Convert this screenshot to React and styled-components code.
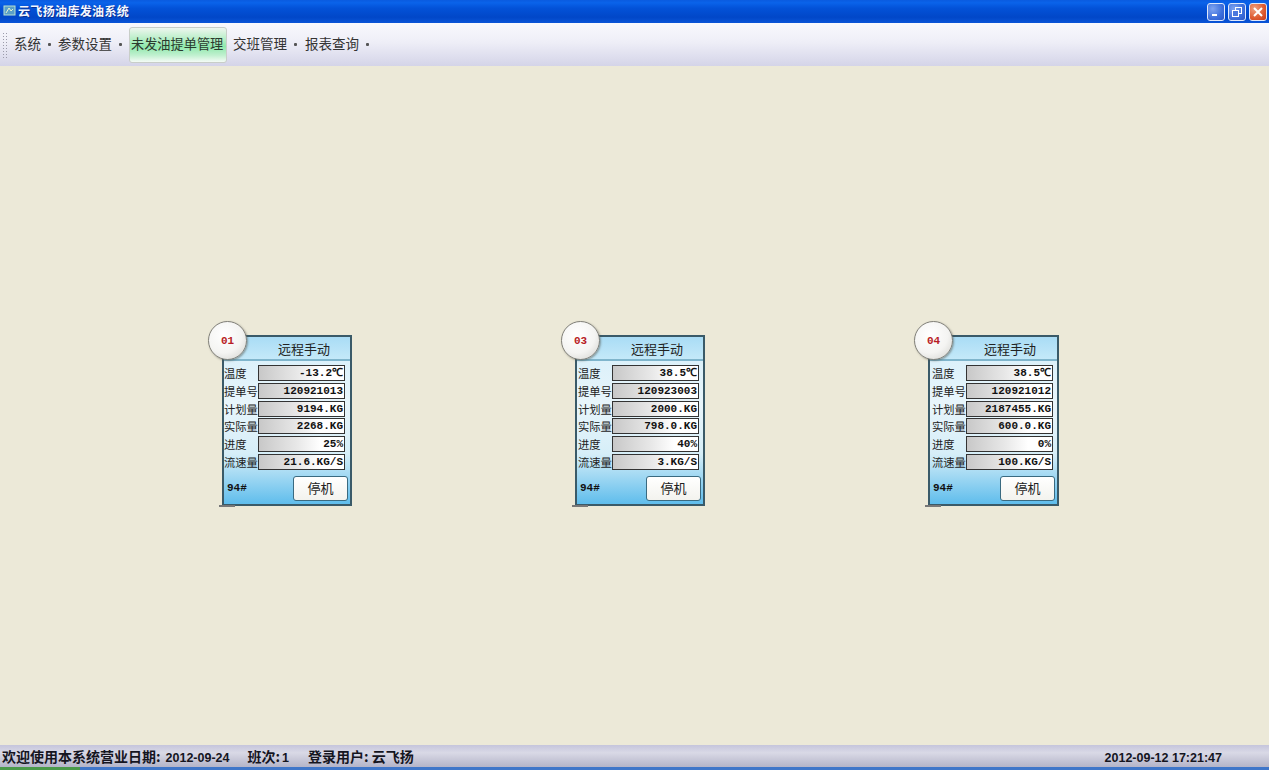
import React from "react";
import styled, { createGlobalStyle } from "styled-components";

const Global = createGlobalStyle`
  html, body { margin: 0; padding: 0; height: 100%; overflow: hidden; }
  #root { height: 100%; }
  * { box-sizing: border-box; }
`;
const CJK = `"Noto Sans CJK SC", "Noto Sans", sans-serif`;
const Desktop = styled.div`
  width: 1269px; height: 770px; display: flex; flex-direction: column;
  background: #ece9d8; font-family: ${CJK}; color: #222; overflow: hidden;
`;
const TitleBar = styled.header`
  height: 23px; flex: none; display: flex; align-items: center; padding: 0 2px 2px 3px;
  background: linear-gradient(180deg, #0a5be0 0%, #0a63ea 12%, #0352d8 35%, #0147c8 75%, #0a55d8 100%);
`;
const AppIcon = styled.svg`width: 13px; height: 13px; flex: none; margin-right: 2px;`;
const Title = styled.span`
  color: #f4f8ff; font-size: 12px; font-weight: 700; letter-spacing: .35px; line-height: 16px; white-space: nowrap;
  text-shadow: 1px 1px 0 #0a2f90;
`;
const WindowButtons = styled.div`margin-left: auto; display: flex; gap: 3px; padding-top: 2px;`;
const WinBtn = styled.div`
  width: 18px; height: 18px; border: 1px solid #dfe8fb; border-radius: 3px; display: flex; align-items: center; justify-content: center;
  background: ${p => p.$close
    ? "radial-gradient(circle at 30% 30%, #f0a080, #dd5a30 60%, #c83a1c)"
    : "radial-gradient(circle at 30% 30%, #7fa4f0, #3d6fdc 60%, #2d58c8)"};
`;
const MenuBar = styled.nav`
  height: 43px; flex: none; display: flex; align-items: center; padding: 0 0 0 2px;
  background: linear-gradient(180deg, #f9f9fd 0%, #eeeef7 45%, #d4d4e8 100%);
`;
const Grip = styled.div`
  width: 7px; height: 26px; margin-right: 5px; flex: none;
  background-image: radial-gradient(circle, #9b9baa 0.8px, transparent 1px);
  background-size: 3px 3px;
`;
const MenuItem = styled.div`
  display: flex; align-items: center; height: 36px; padding-bottom: 3px; font-size: 13.5px; color: #333; white-space: nowrap;
  padding-right: ${p => p.$pad}px;
`;
const Caret = styled.span`
  width: 3px; height: 3px; background: #555; margin-left: 7px; border-radius: 1px; flex: none; margin-top: 3px;
`;
const ActiveItem = styled.div`
  display: flex; align-items: center; height: 36px; width: 98px; margin-right: 6px; flex: none; padding: 0 0 3px 1px;
  font-size: 13.2px; color: #2a3a2e; white-space: nowrap; border-radius: 3px; border: 1px solid #c8cec8;
  background: linear-gradient(180deg, #eef6ef 0%, #c4f0d0 25%, #8fe8ac 55%, #c0f0cf 80%, #f4fbf6 100%);
`;
const Canvas = styled.main`
  flex: 1; display: flex; gap: 223px; padding: 269px 0 0 222px; background: #ece9d8;
`;
const Card = styled.section`
  position: relative; width: ${p => (p.$wide ? 131 : 130)}px; height: 171px; flex: none; display: flex; flex-direction: column;
  border: 2px solid #3a5a68;
  background: linear-gradient(180deg, #bfe6f8 0%, #d9f0fa 8%, #e8f5fb 40%, #d6eef8 70%, #5fbdec 100%);
`;
const Badge = styled.div`
  position: absolute; left: -16px; top: -16px; width: 39px; height: 39px; border-radius: 50%;
  display: flex; align-items: center; justify-content: center;
  background: radial-gradient(circle at 40% 35%, #ffffff 0%, #f4f4f2 55%, #d0d0cc 100%);
  border: 1.5px solid #807f78; box-shadow: 1px 1px 2px rgba(80,80,70,.5);
  color: #b81c24; font: 700 11px "Liberation Mono", monospace;
`;
const Mode = styled.div`
  height: 24px; flex: none; padding: 3px 0 0 54px; font-size: 13px; line-height: 18px; color: #222; white-space: nowrap;
  border-bottom: 2px solid #7fb5cc;
  background: linear-gradient(180deg, #a9dcf5, #c4e9f9);
`;
const Rows = styled.div`
  display: flex; flex-direction: column; gap: 1.8px; padding: 4px 5px 0 ${p => p.$inset}px;
`;
const Row = styled.div`display: flex; align-items: center; justify-content: space-between; height: 16px;`;
const Label = styled.span`font-size: 11.3px; line-height: 16px; color: #222; white-space: nowrap; width: 34px; flex: none;`;
const Value = styled.div`
  width: 87px; height: 16px; flex: none; border: 1px solid #333; text-align: right; padding-right: 1px;
  background: linear-gradient(90deg, #c8c8c8 0%, #e8e8e8 45%, #ffffff 72%);
  font: 700 11px/14px "Liberation Mono", monospace; color: #111; white-space: nowrap; overflow: hidden;
`;
const Foot = styled.div`display: flex; align-items: center; justify-content: space-between; padding: 6px 2px 0 3px;`;
const Oil = styled.span`font: 700 11px "Liberation Mono", monospace; color: #111;`;
const Stop = styled.button`
  width: 55px; height: 25px; padding: 0 0 2px; border: 1px solid #3a6a80; border-radius: 3px; background: linear-gradient(180deg,#fff,#f3f3ee);
  font: 400 13px ${CJK}; color: #222;
`;
const Tick = styled.i`
  position: absolute; left: -5px; bottom: -3px; width: 16px; height: 2px; background: #777;
`;
const StatusBar = styled.footer`
  height: 22px; flex: none; display: flex; align-items: baseline; padding: 1px 47px 0 2px; white-space: nowrap; line-height: 20px;
  background: linear-gradient(180deg, #c5c5dc 0%, #d9d9e6 35%, #b4b4c8 100%);
  color: #15151f; font-size: 14px; font-weight: 700;
`;
const Segment = styled.span`margin-left: ${p => p.$ml}px;`;
const Num = styled.span`font: 700 12.5px/20px "Liberation Sans", sans-serif; margin-left: ${p => p.$ml || 0}px;`;
const Clock = styled.span`margin-left: auto; font: 700 12.5px/20px "Liberation Sans", sans-serif;`;
const Taskbar = styled.div`
  height: 3px; flex: none; display: flex;
  background: #3f76c9;
`;
const Start = styled.div`width: 80px; background: #4a9a4a;`;

const cards = [
  { id: "01", inset: 0, v: ["-13.2℃", "120921013", "9194.KG", "2268.KG", "25%", "21.6.KG/S"] },
  { id: "03", inset: 1, v: ["38.5℃", "120923003", "2000.KG", "798.0.KG", "40%", "3.KG/S"] },
  { id: "04", inset: 2, v: ["38.5℃", "120921012", "2187455.KG", "600.0.KG", "0%", "100.KG/S"], wide: true },
];
const labels = ["温度", "提单号", "计划量", "实际量", "进度", "流速量"];

export default function App() {
  return (
    <Desktop>
      <Global />
      <TitleBar>
        <AppIcon viewBox="0 0 13 13">
          <rect x="1" y="2" width="11" height="9" fill="#5aa0c8" stroke="#b8e0d0" />
          <path d="M3 9 L6 4 L8 7 L10 5" stroke="#e8f4d0" fill="none" />
        </AppIcon>
        <Title>云飞扬油库发油系统</Title>
        <WindowButtons>
          <WinBtn>
            <svg width="10" height="10" viewBox="0 0 10 10"><rect x="1" y="7" width="5" height="2" fill="#fff" /></svg>
          </WinBtn>
          <WinBtn>
            <svg width="12" height="12" viewBox="0 0 12 12" fill="none" stroke="#fff">
              <rect x="4.5" y="1.5" width="6" height="6" />
              <rect x="1.5" y="4.5" width="6" height="6" fill="#4a78de" />
            </svg>
          </WinBtn>
          <WinBtn $close>
            <svg width="12" height="12" viewBox="0 0 12 12" stroke="#fff" strokeWidth="2">
              <path d="M2 2 L10 10 M10 2 L2 10" />
            </svg>
          </WinBtn>
        </WindowButtons>
      </TitleBar>
      <MenuBar>
        <Grip />
        <MenuItem $pad={7}>系统<Caret /></MenuItem>
        <MenuItem $pad={7}>参数设置<Caret /></MenuItem>
        <ActiveItem>未发油提单管理</ActiveItem>
        <MenuItem $pad={8}>交班管理<Caret /></MenuItem>
        <MenuItem $pad={0}>报表查询<Caret /></MenuItem>
      </MenuBar>
      <Canvas>
        {cards.map(c => (
          <Card key={c.id} $wide={c.wide}>
            <Badge>{c.id}</Badge>
            <Mode>远程手动</Mode>
            <Rows $inset={c.inset}>
              {labels.map((l, i) => (
                <Row key={l}>
                  <Label>{l}</Label>
                  <Value>{c.v[i]}</Value>
                </Row>
              ))}
            </Rows>
            <Foot>
              <Oil>94#</Oil>
              <Stop>停机</Stop>
            </Foot>
            <Tick />
          </Card>
        ))}
      </Canvas>
      <StatusBar>
        欢迎使用本系统营业日期:<Num $ml={5}>2012-09-24</Num>
        <Segment $ml={18}>班次:</Segment><Num $ml={2}>1</Num>
        <Segment $ml={19}>登录用户: 云飞扬</Segment>
        <Clock>2012-09-12 17:21:47</Clock>
      </StatusBar>
      <Taskbar><Start /></Taskbar>
    </Desktop>
  );
}
